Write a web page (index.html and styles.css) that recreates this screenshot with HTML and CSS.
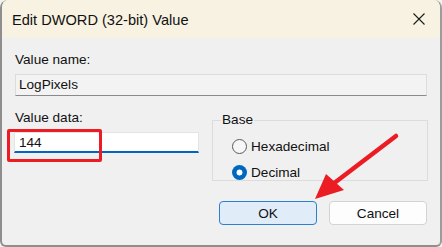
FILE: index.html
```html
<!DOCTYPE html>
<html lang="en">
<head>
  <meta charset="UTF-8" />
  <title>Edit DWORD (32-bit) Value</title>
  <link rel="stylesheet" href="styles.css">
</head>
<body>

  <div class="window">
    <div class="titlebar">
      <span class="title">Edit DWORD (32-bit) Value</span>
      <svg class="close" width="12" height="12" viewBox="0 0 12 12">
        <path d="M0.5 0.5 L11.5 11.5 M11.5 0.5 L0.5 11.5" stroke="#1b1b1b" stroke-width="1.1" fill="none"/>
      </svg>
    </div>

    <div class="content">
      <label class="label" for="valueName">Value name:</label>
      <div class="textbox readonly" id="valueName">LogPixels</div>

      <div class="row">
        <div class="data-col">
          <label class="label" for="valueData">Value data:</label>
          <div class="textbox active" id="valueData">144</div>
        </div>

        <fieldset class="base">
          <legend>Base</legend>
          <div class="radio">
            <span class="dot"></span>
            <span>Hexadecimal</span>
          </div>
          <div class="radio">
            <span class="dot checked"></span>
            <span>Decimal</span>
          </div>
        </fieldset>
      </div>

      <div class="buttons">
        <button class="btn primary">OK</button>
        <button class="btn">Cancel</button>
      </div>
    </div>

    <!-- annotations drawn over the dialog -->
    <div class="highlight"></div>
    <svg class="arrow" width="442" height="247" viewBox="0 0 442 247">
      <line x1="396" y1="136" x2="333" y2="184" stroke="#ec1c24" stroke-width="4.5" stroke-linecap="round"/>
      <polygon points="315,199 326,174 344,190" fill="#ec1c24"/>
    </svg>
  </div>

</body>
</html>
```

FILE: styles.css
```css
:root {
  --title-bg: #f8f2e2;
  --body-bg: #f0f0f0;
  --accent: #0067c0;
  --border: #dcdcdc;
  --text: #111111;
  --mark: #ec1c24;
}

* {
  box-sizing: border-box;
}

body {
  margin: 0;
  background: #f4f2ec;
  font-family: "Liberation Sans", Arial, sans-serif;
  font-size: 13.6px;
  color: var(--text);
}

.window {
  position: relative;
  width: 442px;
  height: 247px;
  background: var(--body-bg);
  border-left: 2px solid #8e8e8e;
  border-right: 2px solid #9c9c9c;
  border-bottom: 2px solid #8e8e8e;
  border-radius: 8px 8px 6px 6px;
  overflow: hidden;
}

.titlebar {
  height: 38px;
  background: var(--title-bg);
  display: flex;
  align-items: center;
  justify-content: space-between;
  padding: 0 15px 0 10px;
}

.title {
  font-size: 14.6px;
  margin-top: 1px;
}

.close {
  display: block;
}

.content {
  padding: 13px 12px 0 12px;
}

.label {
  display: block;
  line-height: 18px;
  margin-left: 1px;
}

.textbox {
  height: 22px;
  line-height: 20px;
  padding: 0 3px;
  border: 1px solid var(--border);
}

.readonly {
  margin: 5px 0 0 1px;
  width: 412px;
  background: #f3f3f3;
  border-bottom-color: #8a8a8a;
}

.row {
  display: grid;
  grid-template-columns: 185px 216px;
  gap: 13px;
  margin-top: 13px;
}

.active {
  margin-top: 5px;
  height: 21px;
  background: #ffffff;
  border-color: #e4e4e4;
  border-bottom: 2px solid var(--accent);
  padding-left: 4px;
  line-height: 19px;
}

.base {
  margin: 2px 0 0 0;
  padding: 4px 8px 6px 8px;
  border: 1px solid var(--border);
  height: 70px;
}

.base legend {
  padding: 0 1px;
  line-height: 18px;
}

.radio {
  display: flex;
  align-items: center;
  gap: 4px;
  height: 26px;
  margin-left: 11px;
}

.dot {
  width: 15px;
  height: 15px;
  border-radius: 50%;
  border: 1px solid #5a5a5a;
  background: #f7f7f7;
}

.dot.checked {
  border: none;
  background: radial-gradient(circle, #ffffff 0 2.7px, var(--accent) 3.3px);
}

.buttons {
  display: flex;
  justify-content: flex-end;
  gap: 12px;
  margin-top: 20px;
  padding-right: 1px;
}

.btn {
  width: 98px;
  height: 24px;
  font-family: inherit;
  font-size: 13.6px;
  color: var(--text);
  background: #fdfdfd;
  border: 1px solid #d3d3d3;
  border-radius: 4px;
  padding: 0;
}

.btn.primary {
  background: #e0ecf8;
  border-color: #2f7fcf;
}

.highlight {
  position: absolute;
  left: 5px;
  top: 129px;
  width: 95px;
  height: 33px;
  border: 3.5px solid var(--mark);
  border-radius: 2px;
}

.arrow {
  position: absolute;
  left: -2px;
  top: 0;
  pointer-events: none;
}
```
